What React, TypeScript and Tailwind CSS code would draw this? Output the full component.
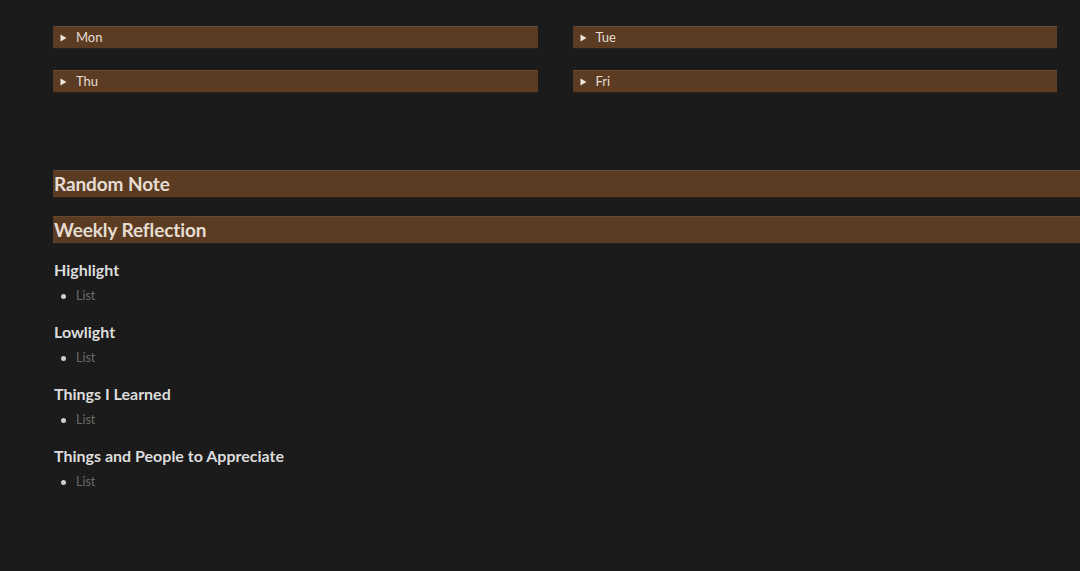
import { ReactNode } from 'react';

const days = [
  ['Mon', 'Tue'],
  ['Thu', 'Fri'],
];

const sections = ['Highlight', 'Lowlight', 'Things I Learned', 'Things and People to Appreciate'];

function Toggle({ label }: { label: string }) {
  return (
    <div className="flex h-[23px] items-center bg-[#5b3c23] border-t border-[#684830] border-b border-b-[#2a1f17] pl-[7px]">
      <svg width="7" height="8" viewBox="0 0 7 8" className="shrink-0">
        <path d="M0.5 0.5 L6.5 4 L0.5 7.5 Z" fill="#ebe6df" />
      </svg>
      <span className="ml-[9px] mt-px text-[13px] text-[#e4ddd3]">{label}</span>
    </div>
  );
}

function Banner({ children }: { children: ReactNode }) {
  return (
    <div className="flex h-[28px] w-[1060px] items-center bg-[#5b3c23] border-t border-[#684830] border-b border-b-[#2a1f17] pl-px">
      <span className="mt-px text-[19px] font-bold tracking-[-0.1px] text-[#e6ddd2]">{children}</span>
    </div>
  );
}

export default function App() {
  return (
    <div
      className="h-[571px] w-[1080px] overflow-hidden bg-[#1b1b1b] pt-[26px] pl-[53px]"
      style={{ fontFamily: 'Lato, "Noto Sans", sans-serif' }}
    >
      <div className="flex w-[1004px] flex-col gap-[21px]">
        {days.map((row) => (
          <div key={row[0]} className="grid grid-cols-2 gap-[35px]">
            {row.map((d) => (
              <Toggle key={d} label={d} />
            ))}
          </div>
        ))}
      </div>

      <div className="mt-[77px] flex flex-col gap-[18px]">
        <Banner>Random Note</Banner>
        <Banner>Weekly Reflection</Banner>
      </div>

      <div className="mt-[14px] flex flex-col gap-[12px] pl-px">
        {sections.map((s) => (
          <div key={s}>
            <h3 className="text-[16px] font-bold leading-[24px] text-[#dcdcdc]">{s}</h3>
            <ul className="mt-[2px] pl-[7px]">
              <li className="flex items-center text-[12.5px] leading-[24px] text-[#6a6a6a]">
                <span className="h-[5px] w-[5px] rounded-full bg-[#cfcfcf]" />
                <span className="ml-[10px]">List</span>
              </li>
            </ul>
          </div>
        ))}
      </div>
    </div>
  );
}
